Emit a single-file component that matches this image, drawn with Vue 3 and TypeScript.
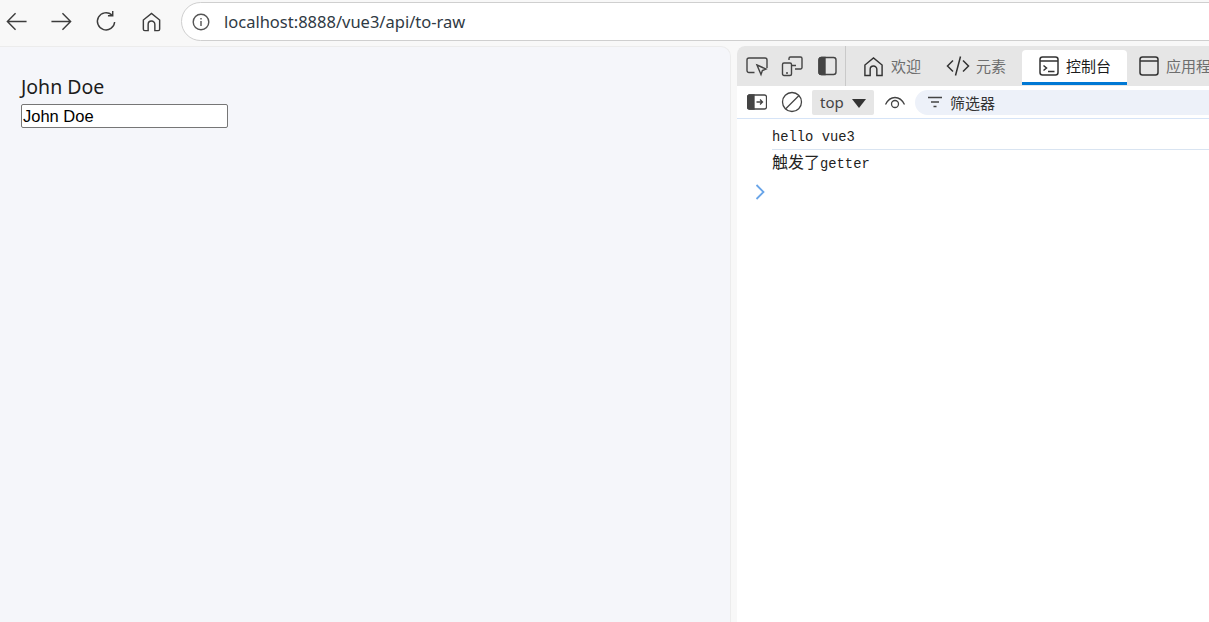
<script setup lang="ts">
const name = 'John Doe'
</script>

<template>
  <div class="window">
    <header class="browser-bar">
      <nav class="nav-buttons">
        <svg class="nav-icon" viewBox="0 0 24 24"><path d="M22.5 12H2.5M11 3.5 2.5 12l8.500 8.500" /></svg>
        <svg class="nav-icon" viewBox="0 0 24 24"><path d="M1.500 12h20M13 3.500l8.500 8.500-8.500 8.500" /></svg>
        <svg class="nav-icon" viewBox="0 0 24 24"><path d="M20.500 12.500a9 9 0 1 1-3-7.400M18.500 1v5h-5" /></svg>
        <svg class="nav-icon" viewBox="0 0 24 24"><path d="M3.500 20V10.500L12 3.500l8.500 7V20a1.500 1.500 0 0 1-1.500 1.500h-3.500V15a3.500 3.500 0 0 0-7 0v6.500H5A1.500 1.500 0 0 1 3.500 20Z" /></svg>
      </nav>
      <div class="address">
        <svg class="info" viewBox="0 0 18 18">
          <circle cx="9" cy="9" r="7.800" />
          <path d="M9 8v5M9 5v1.500" />
        </svg>
        <span class="url">localhost:8888/vue3/api/to-raw</span>
      </div>
    </header>

    <main class="content">
      <section class="page">
        <p class="page-name">{{ name }}</p>
        <input class="page-input" :value="name" />
      </section>

      <section class="devtools">
        <div class="tabbar">
          <div class="tool-icons">
            <svg class="tool" viewBox="0 0 22 22"><path d="M8.500 17.500H3a2 2 0 0 1-2-2V5a2 2 0 0 1 2-2h16a2 2 0 0 1 2 2v8" /><path d="M11 10l9 4-3.600 1.500-1.400 4Z" /></svg>
            <svg class="tool" viewBox="0 0 22 22"><path d="M8 5V3.500A1.500 1.500 0 0 1 9.500 2h10A1.500 1.500 0 0 1 21 3.500v9a1.500 1.500 0 0 1-1.500 1.500H14M11 10.500h4" /><rect x="1.500" y="8" width="9" height="12.500" rx="1.500" /><path d="M5 18h2" /></svg>
            <svg class="tool" viewBox="0 0 22 22"><rect x="3" y="2.500" width="17" height="17" rx="2.500" /><path class="filled" d="M5.500 2.500H9v17H5.500A2.500 2.500 0 0 1 3 17v-12a2.500 2.500 0 0 1 2.500-2.500Z" /></svg>
          </div>
          <div class="tab first-tab">
            <svg class="tab-icon home" viewBox="0 0 22 22"><path d="M2 20.500V9.500L11 2l9 7.500v11h-5.500V14a3.500 3.500 0 0 0-7 0v6.500Z" /></svg>
            <span>欢迎</span>
          </div>
          <div class="tab second-tab">
            <svg class="tab-icon code" viewBox="0 0 24 24"><path d="M7 6.500 1.500 12 7 17.500M17 6.500 22.500 12 17 17.500M14.500 2.500 9.500 21.500" /></svg>
            <span>元素</span>
          </div>
          <div class="tab active">
            <svg class="tab-icon" viewBox="0 0 20 20"><rect x="1" y="1" width="18" height="18" rx="2.500" /><path d="M1 5h18M4.500 9.500l3 2.500-3 2.500M9 15.500h6.500" /></svg>
            <span>控制台</span>
          </div>
          <div class="tab last-tab">
            <svg class="tab-icon" viewBox="0 0 20 20"><rect x="1" y="1" width="18" height="18" rx="2.500" /><path d="M1 5h18" /></svg>
            <span class="nowrap">应用程序</span>
          </div>
        </div>

        <div class="console-bar">
          <svg class="bar-icon sidebar" viewBox="0 0 20 16"><rect x=".5" y="1" width="19" height="14" rx="2" /><path class="filled" d="M2.500 1H7v14H2.500a2 2 0 0 1-2-2V3a2 2 0 0 1 2-2Z" /><path d="M9.500 8h6M13 5.500 15.500 8 13 10.500" /></svg>
          <svg class="bar-icon clear" viewBox="0 0 22 22"><circle cx="11" cy="11" r="9.500" /><path d="M4.500 18 18 4.500" /></svg>
          <div class="context">
            <span>top</span>
            <i class="caret"></i>
          </div>
          <svg class="bar-icon eye" viewBox="0 0 22 16"><path d="M1.500 10.500C4 5.500 7.500 3.500 11 3.500s7 2 9.500 7" /><circle cx="11" cy="10" r="3.500" /></svg>
          <div class="filter">
            <svg class="filter-icon" viewBox="0 0 14 12"><path d="M0 1.500h14M3 6h8M5.500 10.500h3" /></svg>
            <span>筛选器</span>
          </div>
        </div>

        <div class="log">
          <div class="log-row first">hello vue3</div>
          <div class="log-row"><span class="cjk">触发了</span>getter</div>
          <svg class="prompt" viewBox="0 0 10 16"><path d="M1.500 1 8.500 8l-7 7" /></svg>
        </div>
      </section>
    </main>
  </div>
</template>

<style>
html, body { margin: 0; height: 100%; overflow: hidden; background: #fff; }
</style>

<style scoped>
.window {
  width: 1209px;
  height: 622px;
  display: flex;
  flex-direction: column;
  overflow: hidden;
  background: #f8f8f8;
  font-family: "Noto Sans", "Noto Sans CJK SC", sans-serif;
}
.browser-bar {
  height: 46px;
  flex: none;
  display: flex;
  align-items: flex-start;
  box-sizing: border-box;
  padding: 2px 0 0 5px;
}
.nav-buttons { display: flex; gap: 22px; padding-top: 8px; width: 176px; flex: none; }
.nav-icon { width: 23px; height: 23px; fill: none; stroke: #3c3c3c; stroke-width: 1.500; }
.address {
  flex: none;
  width: 1100px;
  height: 39px;
  box-sizing: border-box;
  border: 1.500px solid #cfcfcf;
  border-radius: 20px;
  background: #fff;
  display: flex;
  align-items: center;
  padding-left: 10px;
}
.info { width: 18px; height: 18px; fill: none; stroke: #555; stroke-width: 1.400; }
.url { margin-left: 14px; font-size: 16.500px; color: #303a44; white-space: nowrap; }
.content { flex: 1; display: flex; min-height: 0; }
.page {
  width: 731px;
  flex: none;
  box-sizing: border-box;
  padding: 27px 21px 0;
  background: #f5f6fa;
  border: 1px solid #ececec;
  border-left: none;
  border-bottom: none;
  border-radius: 0 10px 0 0;
}
.page-name { margin: 0; font-size: 19.500px; line-height: 26px; color: #1c1c1c; }
.page-input {
  display: block;
  box-sizing: border-box;
  width: 207px;
  height: 24px;
  margin: 4px 0 0;
  padding: 0 1px;
  border: 1px solid #767676;
  border-radius: 2px;
  background: #fff;
  font-family: "Liberation Sans", Arial, sans-serif;
  font-size: 16.500px;
  color: #000;
}
.devtools {
  margin-left: 6px;
  flex: 1;
  min-width: 0;
  background: #fff;
  border-radius: 8px 0 0 0;
  overflow: hidden;
  display: flex;
  flex-direction: column;
}
.tabbar {
  height: 40px;
  flex: none;
  display: flex;
  align-items: stretch;
  background: #e6e6e6;
  overflow: hidden;
}
.tool-icons {
  display: flex;
  align-items: center;
  gap: 13px;
  width: 109px;
  flex: none;
  box-sizing: border-box;
  padding-left: 9px;
  border-right: 1px solid #c9c9c9;
}
.tool { width: 22px; height: 22px; fill: none; stroke: #444; stroke-width: 1.400; flex: none; }
.filled { fill: #444; stroke: #444; }
.tab {
  flex: none;
  display: flex;
  align-items: center;
  gap: 7px;
  font-size: 15px;
  color: #6e6e6e;
  box-sizing: border-box;
}
.tab span { position: relative; top: -1px; }
.first-tab { padding: 0 16px 0 17px; }
.second-tab { padding: 0 16px 0 9px; gap: 6px; }
.active {
  margin: 4px 0 1px 0;
  width: 105px;
  padding-left: 17px;
  background: #fff;
  color: #1c1c1c;
  border-radius: 4px 4px 0 0;
  border-bottom: 3px solid #0078d4;
}
.last-tab { padding-left: 12px; }
.tab-icon { width: 20px; height: 20px; fill: none; stroke: #333; stroke-width: 1.500; flex: none; }
.tab-icon.home { width: 21px; height: 21px; }
.tab-icon.code { width: 24px; height: 24px; }
.nowrap { white-space: nowrap; }
.console-bar {
  height: 33px;
  flex: none;
  box-sizing: border-box;
  display: flex;
  align-items: center;
  padding: 0 0 0 10px;
  border-bottom: 1px solid #d6e4f7;
}
.bar-icon { fill: none; stroke: #444; stroke-width: 1.300; flex: none; }
.sidebar { width: 20px; height: 16px; }
.clear { width: 22px; height: 22px; margin-left: 14px; }
.context {
  margin-left: 9px;
  width: 62px;
  height: 25px;
  box-sizing: border-box;
  padding-left: 8px;
  background: #e6e6e6;
  border-radius: 2px;
  display: flex;
  align-items: center;
  gap: 8px;
  font-size: 15px;
  color: #444;
}
.caret {
  width: 0;
  height: 0;
  border-left: 7px solid transparent;
  border-right: 7px solid transparent;
  border-top: 9px solid #333;
  margin-top: 2px;
}
.eye { width: 22px; height: 16px; margin-left: 10px; }
.filter {
  margin-left: 9px;
  flex: 1;
  height: 25px;
  border-radius: 13px 0 0 13px;
  background: #edf1f9;
  display: flex;
  align-items: center;
  padding-left: 13px;
  gap: 8px;
  font-size: 15px;
  color: #333;
}
.filter-icon { width: 14px; height: 12px; fill: none; stroke: #444; stroke-width: 1.500; }
.log { flex: 1; }
.log-row {
  margin-left: 35px;
  box-sizing: border-box;
  line-height: 18px;
  font-family: "Liberation Mono", "Noto Sans CJK SC", monospace;
  font-size: 13.800px;
  color: #222;
  white-space: nowrap;
}
.log-row.first { height: 31px; padding-top: 10px; border-bottom: 1px solid #d9e4f1; }
.log-row:not(.first) { padding-top: 5px; height: 27px; }
.cjk { font-size: 16px; }
.prompt {
  display: block;
  width: 10px;
  height: 16px;
  margin: 7px 0 0 18px;
  fill: none;
  stroke: #6aa5e8;
  stroke-width: 1.800;
}
</style>
